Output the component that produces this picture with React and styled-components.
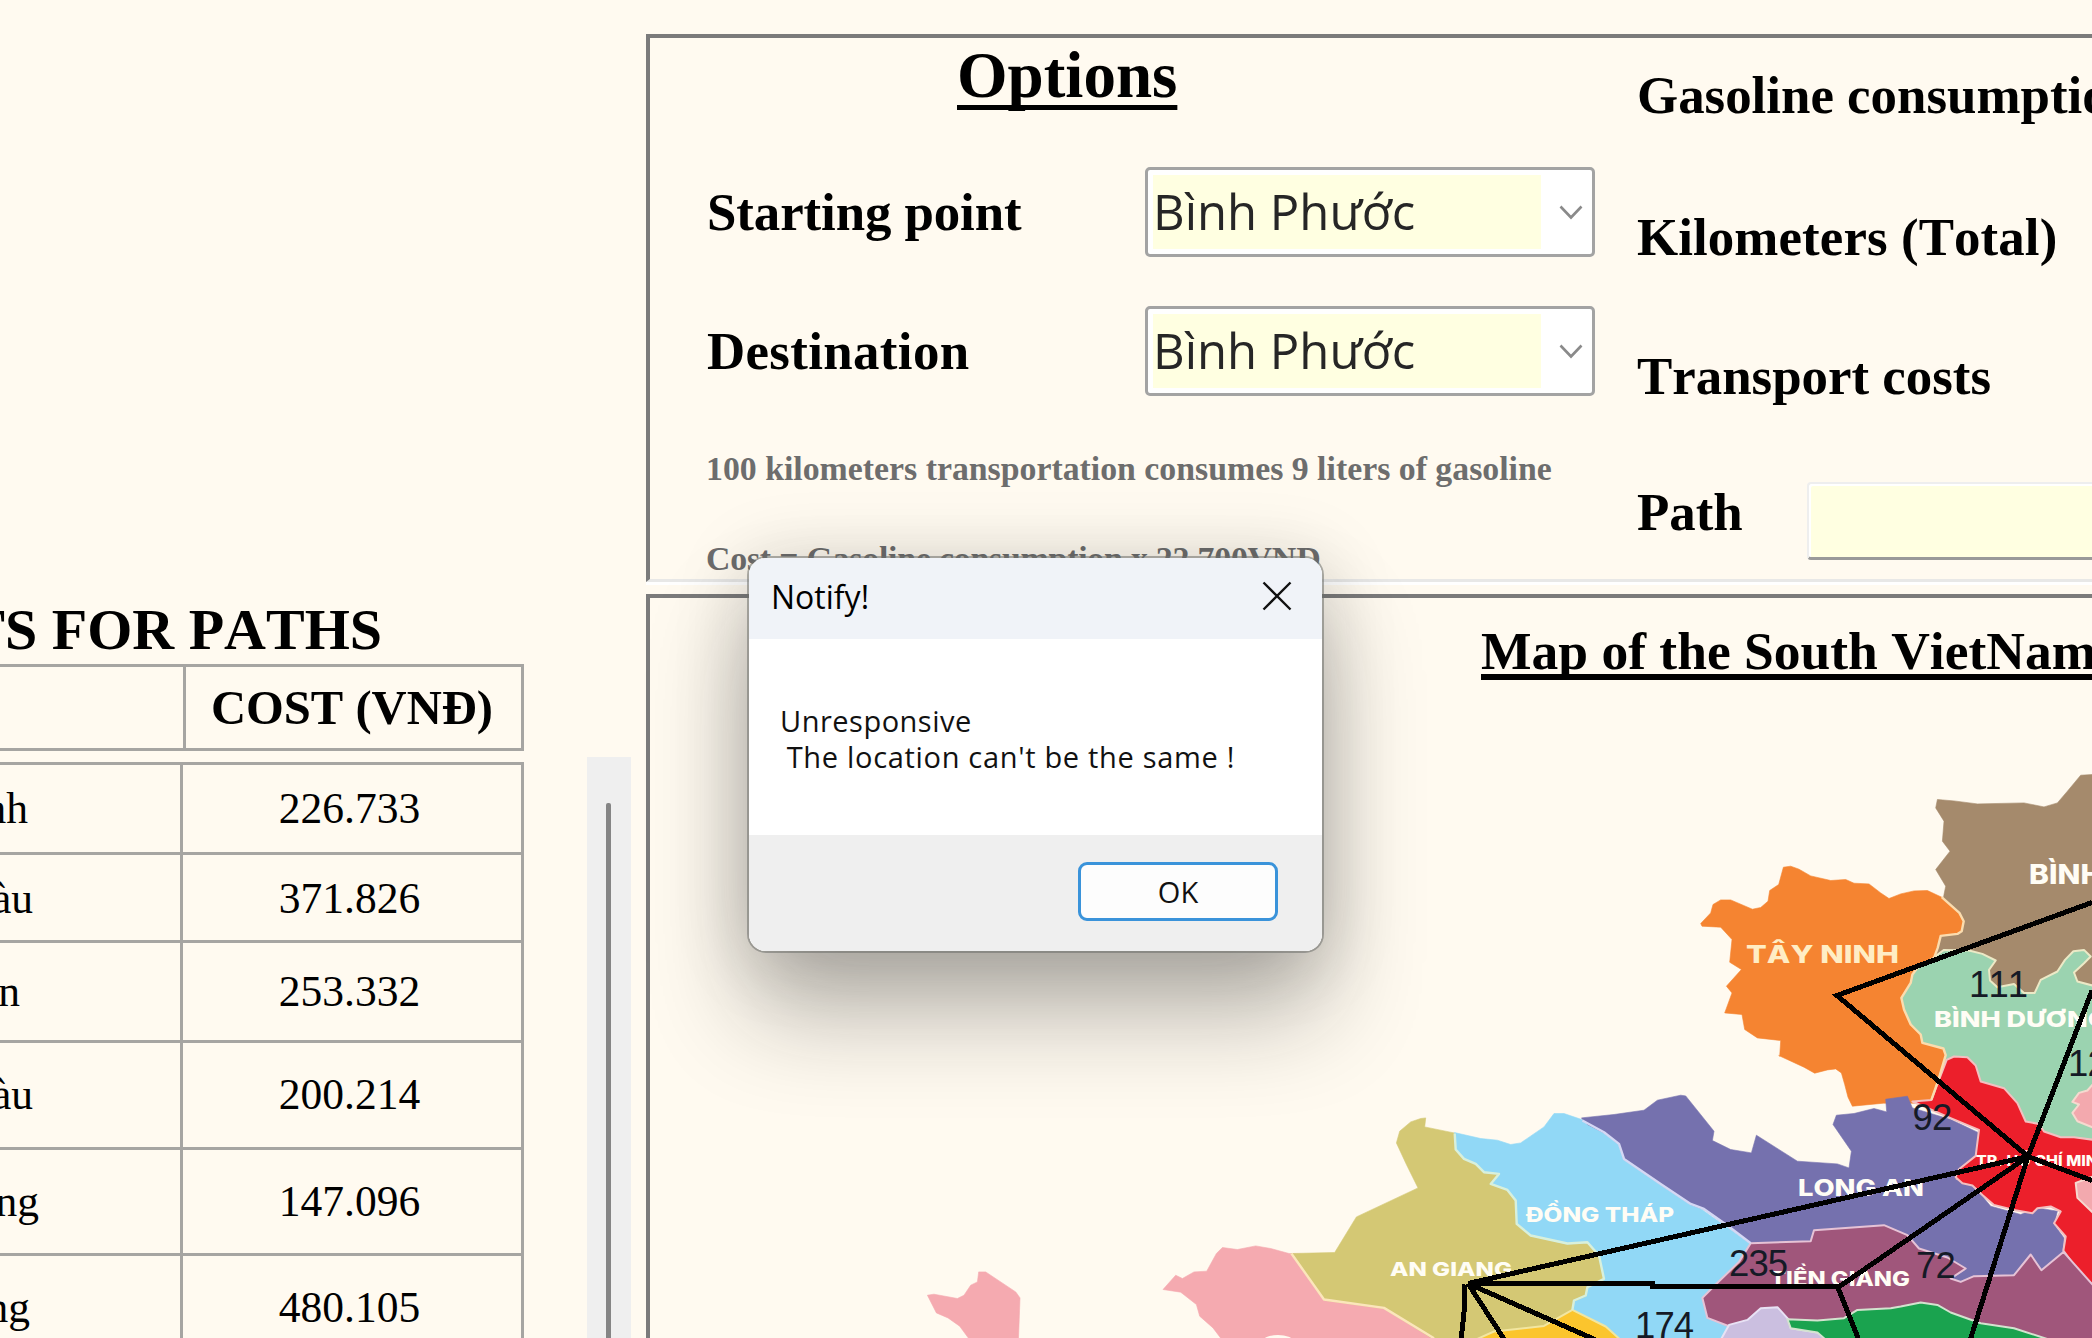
import React from "react";
import styled, { createGlobalStyle } from "styled-components";

const GlobalStyle = createGlobalStyle`
  * { box-sizing: border-box; }
  html, body { margin: 0; padding: 0; overflow: hidden; background: #fffaf0; }
`;

const serif = `"Liberation Serif", "Times New Roman", serif`;
const sans = `"Open Sans", "Noto Sans", sans-serif`;

const Window = styled.main`
  position: relative;
  display: flex;
  width: 2092px;
  height: 1338px;
  overflow: hidden;
  background: #fffaf0;
  color: #000;
  font-family: ${serif};
  font-kerning: none;
`;

/* ---------- left: cost table ---------- */

const CostColumn = styled.section`
  flex: none;
  display: flex;
  flex-direction: column;
  width: 646px;
  padding-top: 601px;
`;

const CostTitle = styled.h2`
  display: flex;
  justify-content: flex-end;
  width: 382px;
  margin: 0;
  font-size: 58px;
  line-height: 58px;
  font-weight: bold;
  white-space: nowrap;
`;

const HeaderTable = styled.div`
  display: grid;
  grid-template-columns: 183px 341px;
  width: 524px;
  height: 87px;
  margin-top: 5px;
  border: 3px solid #a6a5a2;
  border-left: 0;
`;

const HeaderCell = styled.div`
  display: flex;
  align-items: center;
  justify-content: center;
  border-left: ${(p) => (p.$first ? "0" : "3px solid #a6a5a2")};
  padding: 1px 6px 0 0;
  font-size: 48.6px;
  line-height: 48px;
  font-weight: bold;
  white-space: nowrap;
`;

const ListArea = styled.div`
  display: flex;
  align-items: flex-start;
  justify-content: space-between;
  width: 631px;
  margin-top: 6px;
  height: 581px;
`;

const CostList = styled.div`
  width: 524px;
  margin-top: 5px;
  border-top: 3px solid #a6a5a2;
  border-right: 3px solid #a6a5a2;
`;

const CostRow = styled.div`
  display: grid;
  grid-template-columns: 183px 338px;
  height: ${(p) => p.$height}px;
  border-bottom: 3px solid #a6a5a2;
  font-size: 43.5px;
  line-height: 44px;
`;

const PlaceCell = styled.div`
  display: flex;
  justify-content: flex-end;
  width: ${(p) => p.$end}px;
  padding-top: ${(p) => p.$top}px;
  white-space: nowrap;
`;

const PriceCell = styled.div`
  display: flex;
  justify-content: center;
  padding-top: ${(p) => p.$top}px;
  padding-right: 5px;
  border-left: 3px solid #a6a5a2;
  margin-left: -3px;
`;

const ScrollTrack = styled.div`
  width: 44px;
  height: 581px;
  padding: 46px 19px 0;
  background: #efefef;
`;

const ScrollThumb = styled.div`
  width: 5px;
  height: 600px;
  border-radius: 2px 2px 0 0;
  background: #858585;
`;

/* ---------- right: options ---------- */

const MainColumn = styled.section`
  flex: none;
  display: flex;
  flex-direction: column;
  width: 1446px;
  padding-top: 34px;
`;

const OptionsPanel = styled.div`
  flex: none;
  display: grid;
  grid-template-columns: 987px 1fr;
  height: 548px;
  border-top: 4px solid #7b7b7b;
  border-left: 4px solid #7b7b7b;
  border-bottom: 3px solid #e8e8e7;
  box-shadow: 0 3px 0 #fff;
  overflow: hidden;
`;

const OptionsLeft = styled.div`
  padding: 5px 42px 0 57px;
`;

const OptionsTitle = styled.h1`
  margin: 0 0 59px 250px;
  font-size: 65px;
  line-height: 65px;
  font-weight: bold;
  text-decoration: underline;
  text-decoration-thickness: 5px;
  text-underline-offset: 8px;
  text-decoration-skip-ink: none;
`;

const Field = styled.div`
  display: flex;
  align-items: center;
  justify-content: space-between;
  width: 888px;
  height: 90px;
  margin-bottom: 49px;
`;

const Label = styled.div`
  font-size: 52.9px;
  line-height: 53px;
  font-weight: bold;
  white-space: nowrap;
  letter-spacing: ${(p) => p.$track || 0}px;
`;

const Combo = styled.div`
  display: flex;
  align-items: center;
  width: 450px;
  height: 90px;
  padding: 5px;
  border: 3px solid #a3a3a3;
  border-radius: 5px;
  background: #fff;
`;

const ComboValue = styled.div`
  display: flex;
  align-items: center;
  width: 388px;
  height: 74px;
  padding-bottom: 2px;
  background: #ffffe1;
  color: #262626;
  font-family: ${sans};
  font-size: 49px;
  line-height: 72px;
  white-space: nowrap;
`;

const ComboArrow = styled.svg`
  width: 26px;
  height: 18px;
  margin-left: 17px;
`;

const Note = styled.p`
  margin: 56px 0 0 -1px;
  color: #6d6d6d;
  font-size: 33.8px;
  line-height: 34px;
  font-weight: bold;
  white-space: nowrap;
  letter-spacing: ${(p) => p.$track || 0}px;
`;

const OptionsRight = styled.div`
  display: flex;
  flex-direction: column;
  padding-top: 31px;
`;

const ResultRow = styled.div`
  display: flex;
  height: ${(p) => p.$height}px;
`;

const PathLabel = styled(Label)`
  width: 170px;
  padding-top: 4px;
`;

const PathField = styled.div`
  flex: none;
  width: 400px;
  height: 78px;
  border-top: 2px solid #eee;
  border-left: 2px solid #eee;
  border-bottom: 3px solid #999;
  border-radius: 4px;
  background: #ffffe1;
  box-shadow: inset 2px 2px 0 #fff;
`;

/* ---------- right: map ---------- */

const MapPanel = styled.div`
  flex: none;
  height: 800px;
  margin-top: 12px;
  padding: 26px 0 0;
  border-top: 4px solid #7b7b7b;
  border-left: 4px solid #7b7b7b;
`;

const MapTitle = styled.h2`
  height: 66px;
  margin: 0 0 0 831px;
  font-size: 53.5px;
  line-height: 55px;
  font-weight: bold;
  white-space: nowrap;
  text-decoration: underline;
  text-decoration-thickness: 5.5px;
  text-underline-offset: 5px;
  text-decoration-skip-ink: none;
`;

const MapDrawing = styled.svg`
  display: block;
  width: 1442px;
  height: 648px;
`;

/* ---------- dialog ---------- */

const Dialog = styled.div`
  position: absolute;
  left: 749px;
  top: 558px;
  display: flex;
  flex-direction: column;
  width: 573px;
  height: 393px;
  border-radius: 17px;
  background: #fff;
  overflow: hidden;
  font-family: ${sans};
`;

const DialogShadow = styled.div`
  position: absolute;
  left: 749px;
  top: 558px;
  width: 573px;
  height: 393px;
  border-radius: 17px;
  box-shadow:
    0 0 0 2px rgba(110, 112, 108, 0.55),
    0 62px 100px rgba(20, 20, 20, 0.3),
    0 6px 74px rgba(20, 20, 20, 0.18);
`;

const DialogBar = styled.header`
  display: flex;
  align-items: center;
  justify-content: space-between;
  height: 81px;
  padding: 0 30px 0 22px;
  background: #f0f3f8;
`;

const DialogTitle = styled.div`
  font-size: 32px;
  line-height: 40px;
  padding-bottom: 4px;
`;

const CloseIcon = styled.svg`
  width: 30px;
  height: 30px;
  margin-bottom: 5px;
`;

const DialogBody = styled.div`
  height: 196px;
  padding: 64px 31px 0;
  font-size: 29px;
  line-height: 35.5px;
  white-space: pre;
  color: #111;
`;

const DialogLine = styled.div`
  letter-spacing: ${(p) => p.$track}px;
  margin-left: ${(p) => p.$shift || 0}px;
`;

const DialogFooter = styled.footer`
  display: flex;
  justify-content: flex-end;
  height: 116px;
  padding: 27px 44px 0 0;
  background: #efefef;
`;

const OkButton = styled.button`
  width: 200px;
  height: 59px;
  padding: 0;
  border: 3px solid #3a93da;
  border-radius: 9px;
  background: #fdfdfd;
  color: #111;
  font-family: ${sans};
  font-size: 29px;
`;

/* Outlines are digitised on four sheets at three units per pixel. */
const SHEETS = { A: [1660, 760], B: [1660, 1040], C: [1280, 1060], D: [900, 1080] };

function outline(trace) {
  let origin = SHEETS.A;
  return trace
    .trim()
    .split(/\s+/)
    .flatMap((token) => {
      if (SHEETS[token]) {
        origin = SHEETS[token];
        return [];
      }
      const [x, y] = token.split(",").map(Number);
      return [`${(origin[0] + x / 3).toFixed(1)},${(origin[1] + y / 3).toFixed(1)}`];
    })
    .join(" ");
}

const REGIONS = [
  { fill: "#a58a6c", trace: "A 830,115 880,119 950,128 1090,125 1150,137 1190,125 1220,90 1260,42 1300,40 1300,720 830,720 820,590 850,400 855,375 825,325 868,270 845,240 850,180 825,140" },
  { fill: "#9bd3b0", edge: "#ece9c6", trace: "A 735,640 820,588 850,566 925,568 965,578 1005,598 985,626 988,658 1010,678 1060,668 1090,695 1122,695 1140,656 1190,631 1213,596 1238,570 1270,566 1290,586 1270,606 1240,634 1250,661 1300,674 B 1300,300 1240,292 1200,292 1150,275 1000,250 850,100 720,30 A 720,720" },
  { fill: "#f3a9ae", edge: "#f6d9cf", trace: "B 1300,125 1280,148 1255,155 1235,182 1255,190 1235,215 1250,240 1300,260" },
  { fill: "#f58431", trace: "A 120,487 150,455 157,430 180,416 210,416 275,444 300,439 322,420 327,388 354,370 368,318 390,315 415,324 450,344 510,358 555,355 580,366 625,368 660,395 685,412 720,398 760,389 800,388 843,408 896,455 909,480 903,510 890,518 840,524 831,560 820,590 770,620 755,640 750,665 722,710 730,745 750,790 780,820 785,845 848,862 B 855,42 833,116 812,176 765,186 668,186 575,195 562,168 552,130 542,95 525,83 500,86 462,96 430,78 354,43 A 357,885 360,838 290,830 252,805 244,760 192,755 214,695 197,675 242,625 207,603 214,535 180,498 124,495" },
  { fill: "#f5aab0", trace: "D 787,625 825,582 845,592 880,572 918,570 947,517 965,499 1010,505 1065,494 1110,502 1165,517 1210,520 C 300,720 460,780 560,840 0,850 D 967,780 937,740 897,705 887,670 840,633" },
  { fill: "#f5aab0", trace: "D 80,642 100,639 170,652 190,642 210,612 230,602 234,572 255,572 345,632 358,650 353,780 210,780 177,735 142,710 107,695" },
  { fill: "#91d8f6", trace: "C 521,214 600,232 650,237 690,250 720,245 790,197 820,157 850,157 903,175 975,210 1035,250 1200,400 B 270,608 270,700 230,894 C 500,840 500,300" },
  { fill: "#d4c874", trace: "C 435,170 432,197 520,215 525,265 550,295 585,310 610,335 655,340 630,370 680,388 705,420 708,490 750,525 860,550 920,545 955,585 970,655 920,680 915,705 880,720 875,750 800,795 700,808 600,835 460,835 310,742 130,717 32,577 162,574 227,467 412,380 377,310 347,245 357,210 390,182 420,172" },
  { fill: "#7571ae", trace: "C 902,170 1000,160 1090,147 1130,117 1200,102 B 75,164 160,270 155,298 210,325 272,335 287,282 410,360 530,368 565,380 572,330 517,250 527,222 580,217 640,202 678,212 675,174 740,165 755,200 870,235 955,275 945,345 895,380 885,415 940,435 990,495 1080,520 1130,500 1190,510 1180,550 1210,590 1205,635 1145,690 1110,640 1060,700 985,710 895,725 870,715 915,685 775,640 730,590 670,557 460,570 450,603 270,608 200,555 130,505 90,490 0,430 C 1030,295 1015,250 970,215 920,190" },
  { fill: "#ec1f2b", edge: "#f3bfc0", trace: "B 880,46 920,48 945,73 960,121 1030,141 1070,186 1095,241 1135,248 1150,271 1200,288 1240,288 1300,296 1300,736 1250,686 1208,628 1215,586 1180,546 1200,511 1170,496 1130,501 1115,516 1060,506 1000,491 965,461 935,433 905,426 885,408 895,384 945,344 955,266 870,231 755,181 812,176 835,116 858,56" },
  { fill: "#f3a9ae", edge: "#f6d9cf", trace: "B 1300,405 1245,425 1250,470 1300,518" },
  { fill: "#a0567b", edge: "#e6c3d6", trace: "B 270,606 450,600 460,567 670,552 740,582 775,622 860,649 915,682 870,712 900,722 940,705 1060,702 1110,640 1142,687 1208,632 1300,735 1300,900 600,900 380,850 350,803 310,803 260,840 205,855 140,830 125,770 165,730 235,662" },
  { fill: "#cbbfe0", edge: "#e8e2f4", trace: "B 180,896 205,851 260,836 300,801 350,798 385,836 390,861 470,874 520,900" },
  { fill: "#1aa34f", edge: "#d3e3cf", trace: "B 380,834 470,838 550,831 590,806 690,801 720,796 780,784 830,791 870,814 960,846 1060,861 1180,900 500,900 470,874 390,861" },
  { fill: "#fbc52d", edge: "#f2e6a0", trace: "C 570,842 640,811 790,794 875,746 975,796 1025,841" },
];

const BORDERS = [
  { color: "#fbdcae", trace: "A 843,408 896,455 909,480 903,510 890,518 840,524 831,560 820,590 770,620 755,640 750,665 722,710 730,745 750,790 780,820 785,845 848,862 B 855,42 833,116 812,176" },
  { color: "#fbe6bb", trace: "C 32,577 130,715 310,740 460,831" },
  { color: "#d8f0dc", trace: "C 522,217 525,265 550,293 585,308 610,333 655,338 630,368 680,386 705,418 708,488 750,523 860,547 920,543 955,583 970,653 920,678 915,703 880,718 875,746" },
  { color: "#d5d8f4", trace: "C 905,178 970,213 1015,248 1030,293 1140,368 B 0,428 90,488 130,503 200,553 270,606" },
];

const PLACES = [
  { name: "TÂY NINH", x: 1746, y: 963, size: 24.5, length: 153, color: "#ffedc4" },
  { name: "BÌNH PHƯỚC", x: 2029, y: 883.5, size: 27, length: 190 },
  { name: "BÌNH DƯƠNG", x: 1934, y: 1026.5, size: 22, length: 174 },
  { name: "LONG AN", x: 1798, y: 1196, size: 22.5, length: 126 },
  { name: "ĐỒNG THÁP", x: 1526, y: 1222, size: 19.5, length: 148 },
  { name: "AN GIANG", x: 1390, y: 1276, size: 19, length: 122 },
  { name: "TIỀN GIANG", x: 1770, y: 1285.5, size: 19.5, length: 140 },
  { name: "TP. HỒ CHÍ MINH", x: 1976, y: 1166, size: 14, length: 134 },
];

const ROUTES = [
  "2092,902 1837,995 2028,1156 2092,990",
  "2028,1156 2092,1180",
  "2028,1156 1468,1283",
  "2028,1156 1838,1287 1859,1340",
  "2028,1156 1970,1340",
  "1468,1283 1652,1283 1652,1286 1838,1286",
  "1465,1284 1464,1312 1461,1340",
  "1468,1283 1505,1340",
  "1468,1283 1597,1340",
];

const DISTANCES = [
  { km: "111", x: 1969, y: 996.5 },
  { km: "12", x: 2068, y: 1075.5 },
  { km: "92", x: 1912.5, y: 1130 },
  { km: "235", x: 1729, y: 1275.5 },
  { km: "72", x: 1916, y: 1277.5 },
  { km: "174", x: 1635, y: 1338 },
];

const COSTS = [
  { place: "nh", end: 28, price: "226.733", height: 90, top: 20.6 },
  { place: "àu", end: 33, price: "371.826", height: 88, top: 20.6 },
  { place: "n", end: 20, price: "253.332", height: 100, top: 25.6 },
  { place: "àu", end: 33, price: "200.214", height: 107, top: 29 },
  { place: "ng", end: 39, price: "147.096", height: 106, top: 29 },
  { place: "ng", end: 30, price: "480.105", height: 106, top: 29 },
];

function ComboBox({ value }) {
  return (
    <Combo>
      <ComboValue>{value}</ComboValue>
      <ComboArrow viewBox="0 0 26 18" fill="none" stroke="#8a8a8a" strokeWidth="2.6">
        <path d="M2.5 3.5 13 14.5 23.5 3.5" />
      </ComboArrow>
    </Combo>
  );
}

function SouthMap() {
  return (
    <MapDrawing viewBox="650 690 1442 648">
      <g transform="translate(0.7 1.2)">
        {REGIONS.map((r, i) => (
          <polygon
            key={i}
            points={outline(r.trace)}
            fill={r.fill}
            stroke={r.edge || r.fill}
            strokeWidth={r.edge ? 2 : 0.6}
            strokeLinejoin="round"
          />
        ))}
        {BORDERS.map((b) => (
          <polyline key={b.trace} points={outline(b.trace)} fill="none" stroke={b.color} strokeWidth="2.4" strokeLinejoin="round" />
        ))}
      </g>
      <ellipse cx="1278" cy="1341" rx="15" ry="6" fill="#fffaf0" />
      {PLACES.map((p) => (
        <text
          key={p.name}
          x={p.x}
          y={p.y}
          fill={p.color || "#fffdf5"}
          fontFamily='Inter, "Open Sans", sans-serif'
          fontWeight="800"
          fontSize={p.size}
          textLength={p.length}
          lengthAdjust="spacingAndGlyphs"
        >
          {p.name}
        </text>
      ))}
      <g transform="translate(0 0.5)">
        {ROUTES.map((points) => (
          <polyline key={points} points={points} fill="none" stroke="#000" strokeWidth="5" shapeRendering="crispEdges" />
        ))}
      </g>
      {DISTANCES.map((d) => (
        <text key={d.km} x={d.x} y={d.y} fill="#151a26" fontFamily='"Liberation Sans", Arial, sans-serif' fontSize="36.5" letterSpacing="-0.9">
          {d.km}
        </text>
      ))}
    </MapDrawing>
  );
}

export default function App() {
  return (
    <Window>
      <GlobalStyle />
      <CostColumn>
        <CostTitle>COSTS FOR PATHS</CostTitle>
        <HeaderTable>
          <HeaderCell $first />
          <HeaderCell>COST (VNĐ)</HeaderCell>
        </HeaderTable>
        <ListArea>
          <CostList>
            {COSTS.map((c) => (
              <CostRow key={c.price} $height={c.height}>
                <PlaceCell $end={c.end} $top={c.top}>{c.place}</PlaceCell>
                <PriceCell $top={c.top}>{c.price}</PriceCell>
              </CostRow>
            ))}
          </CostList>
          <ScrollTrack>
            <ScrollThumb />
          </ScrollTrack>
        </ListArea>
      </CostColumn>

      <MainColumn>
        <OptionsPanel>
          <OptionsLeft>
            <OptionsTitle>Options</OptionsTitle>
            <Field>
              <Label $track={-0.1}>Starting point</Label>
              <ComboBox value="Bình Phước" />
            </Field>
            <Field>
              <Label $track={0.35}>Destination</Label>
              <ComboBox value="Bình Phước" />
            </Field>
            <Note>100 kilometers transportation consumes 9 liters of gasoline</Note>
            <Note $track={-0.2}>Cost = Gasoline consumption x 22.700VNĐ</Note>
          </OptionsLeft>
          <OptionsRight>
            <ResultRow $height={142}><Label>Gasoline consumption</Label></ResultRow>
            <ResultRow $height={139}><Label $track={0.1}>Kilometers (Total)</Label></ResultRow>
            <ResultRow $height={132}><Label>Transport costs</Label></ResultRow>
            <ResultRow $height={78}>
              <PathLabel>Path</PathLabel>
              <PathField />
            </ResultRow>
          </OptionsRight>
        </OptionsPanel>
        <MapPanel>
          <MapTitle>Map of the South VietNam</MapTitle>
          <SouthMap />
        </MapPanel>
      </MainColumn>

      <DialogShadow />
      <Dialog>
        <DialogBar>
          <DialogTitle>Notify!</DialogTitle>
          <CloseIcon viewBox="0 0 30 30" fill="none" stroke="#111" strokeWidth="2.4">
            <path d="M1.5 1.5 28.5 28.5M28.5 1.5 1.5 28.5" />
          </CloseIcon>
        </DialogBar>
        <DialogBody>
          <DialogLine $track={0.5}>Unresponsive</DialogLine>
          <DialogLine $track={0.68} $shift={-1.5}>{" The location can't be the same !"}</DialogLine>
        </DialogBody>
        <DialogFooter>
          <OkButton>OK</OkButton>
        </DialogFooter>
      </Dialog>
    </Window>
  );
}
